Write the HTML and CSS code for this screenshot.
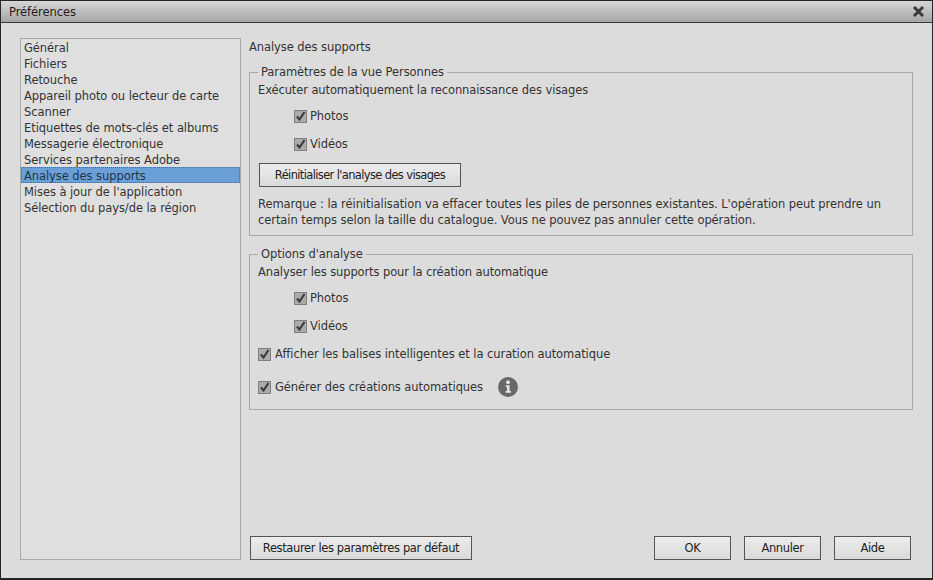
FILE: index.html
```html
<!DOCTYPE html>
<html lang="fr">
<head>
<meta charset="utf-8">
<title>Préférences</title>
<link rel="stylesheet" href="styles.css">
</head>
<body>
<div class="window">
  <header class="titlebar">
    <span class="title">Préférences</span>
    <svg class="close" width="13" height="13" viewBox="0 0 13 13"><path d="M2 2L11 11M11 2L2 11" stroke="#3a3a3a" stroke-width="3" fill="none"/></svg>
  </header>
  <div class="content">
    <ul class="nav">
      <li>Général</li>
      <li>Fichiers</li>
      <li>Retouche</li>
      <li>Appareil photo ou lecteur de carte</li>
      <li>Scanner</li>
      <li>Etiquettes de mots-clés et albums</li>
      <li>Messagerie électronique</li>
      <li>Services partenaires Adobe</li>
      <li class="selected">Analyse des supports</li>
      <li>Mises à jour de l'application</li>
      <li>Sélection du pays/de la région</li>
    </ul>
    <main class="panel">
      <h1 class="heading">Analyse des supports</h1>
      <fieldset class="group group-people">
        <legend>Paramètres de la vue Personnes</legend>
        <p class="line">Exécuter automatiquement la reconnaissance des visages</p>
        <div class="check indent"><span class="box"><svg width="11" height="11" viewBox="0 0 11 11"><path d="M2 5.5L4.5 8.5L9.5 1" stroke="#3c3c3c" stroke-width="2.2" fill="none"/></svg></span>Photos</div>
        <div class="check indent"><span class="box"><svg width="11" height="11" viewBox="0 0 11 11"><path d="M2 5.5L4.5 8.5L9.5 1" stroke="#3c3c3c" stroke-width="2.2" fill="none"/></svg></span>Vidéos</div>
        <button class="btn btn-reset" type="button">Réinitialiser l'analyse des visages</button>
        <p class="note">Remarque : la réinitialisation va effacer toutes les piles de personnes existantes. L'opération peut prendre un certain temps selon la taille du catalogue. Vous ne pouvez pas annuler cette opération.</p>
      </fieldset>
      <fieldset class="group group-options">
        <legend>Options d'analyse</legend>
        <p class="line">Analyser les supports pour la création automatique</p>
        <div class="check indent"><span class="box"><svg width="11" height="11" viewBox="0 0 11 11"><path d="M2 5.5L4.5 8.5L9.5 1" stroke="#3c3c3c" stroke-width="2.2" fill="none"/></svg></span>Photos</div>
        <div class="check indent"><span class="box"><svg width="11" height="11" viewBox="0 0 11 11"><path d="M2 5.5L4.5 8.5L9.5 1" stroke="#3c3c3c" stroke-width="2.2" fill="none"/></svg></span>Vidéos</div>
        <div class="check"><span class="box"><svg width="11" height="11" viewBox="0 0 11 11"><path d="M2 5.5L4.5 8.5L9.5 1" stroke="#3c3c3c" stroke-width="2.2" fill="none"/></svg></span>Afficher les balises intelligentes et la curation automatique</div>
        <div class="check check-last"><span class="box"><svg width="11" height="11" viewBox="0 0 11 11"><path d="M2 5.5L4.5 8.5L9.5 1" stroke="#3c3c3c" stroke-width="2.2" fill="none"/></svg></span>Générer des créations automatiques
          <svg class="info" width="20" height="20" viewBox="0 0 20 20"><circle cx="10" cy="10" r="10" fill="#686868"/><circle cx="10" cy="5.2" r="1.9" fill="#e4e4e4"/><path d="M7.8 8.2H11.6V14H13V15.8H7.6V14H9V10H7.8Z" fill="#e4e4e4"/></svg>
        </div>
      </fieldset>
      <footer class="actions">
        <button class="btn btn-default" type="button">Restaurer les paramètres par défaut</button>
        <div class="actions-right">
          <button class="btn btn-small" type="button">OK</button>
          <button class="btn btn-small" type="button">Annuler</button>
          <button class="btn btn-small" type="button">Aide</button>
        </div>
      </footer>
    </main>
  </div>
</div>
</body>
</html>
```

FILE: styles.css
```css
* { box-sizing: border-box; }
html, body { margin: 0; padding: 0; }
body {
  width: 933px;
  height: 580px;
  overflow: hidden;
  font-family: "DejaVu Sans", sans-serif;
  font-size: 11.5px;
  letter-spacing: -0.07px;
  line-height: 16px;
  color: #333;
  background: #dcdcdc;
}
.window {
  width: 933px;
  height: 580px;
  display: flex;
  flex-direction: column;
  border: 1px solid #262626;
  border-bottom-width: 2px;
  background: #dcdcdc;
}
.titlebar {
  height: 22px;
  flex: none;
  display: flex;
  align-items: center;
  justify-content: space-between;
  padding: 0 7px 0 8px;
  background: linear-gradient(#d6d6d6, #a6a6a6);
  border-bottom: 1px solid #3a3a3a;
  color: #1c1c1c;
}
.content {
  flex: 1;
  display: flex;
  padding: 15px 19px 18px 19px;
  gap: 8px;
}
.nav {
  list-style: none;
  margin: 0;
  padding: 0;
  width: 221px;
  flex: none;
  border: 1px solid #a9a9a9;
  background: #dfdfdf;
}
.nav li {
  height: 16px;
  padding: 1px 0 0 3px;
  white-space: nowrap;
}
.nav .selected {
  background: #6a9fd8;
  outline: 1px dotted #4a6a90;
  outline-offset: -1px;
  color: #23354a;
}
.panel {
  flex: 1;
  display: flex;
  flex-direction: column;
  min-width: 0;
  padding-top: 1px;
}
.heading {
  margin: 0;
  font-size: inherit;
  font-weight: normal;
  line-height: 16px;
}
.group {
  margin: 0;
  padding: 0 8px;
  min-width: 0;
  width: 664px;
  border: 1px solid #a9a9a9;
}
.group legend {
  margin-left: 0;
  padding: 0 3px;
  line-height: 16px;
}
.group-people { height: 172px; margin-top: 9px; }
.group-options { height: 164px; margin-top: 10px; }
.line { margin: 2px 0 0; letter-spacing: -0.11px; }
.check {
  height: 28px;
  display: flex;
  align-items: center;
  white-space: nowrap;
}
.indent { padding-left: 36px; }
.check .box {
  width: 13px;
  height: 13px;
  flex: none;
  margin-right: 4px;
  background: #ababab;
  border: 1px solid #808080;
  display: flex;
  align-items: center;
  justify-content: center;
}
.indent .box { margin-right: 3px; }
.check .box svg { flex: none; }
.line + .check { margin-top: 4px; }
.check-last { height: 38px; }
.info { margin-left: 15px; flex: none; }
.btn {
  height: 24px;
  padding: 0;
  font: inherit;
  letter-spacing: -0.37px;
  white-space: nowrap;
  color: #222;
  background: linear-gradient(#ececec, #dadada);
  border: 1px solid #555;
  border-radius: 0;
}
.btn-reset { display: block; width: 202px; margin: 5px 0 0 1px; letter-spacing: -0.64px; }
.note { margin: 9px 0 0; width: 640px; }
.actions {
  margin-top: auto;
  display: flex;
  justify-content: space-between;
  padding: 0 2px 0 1px;
}
.btn-default { width: 222px; }
.actions-right { display: flex; gap: 13px; }
.btn-small { width: 77px; }
```
